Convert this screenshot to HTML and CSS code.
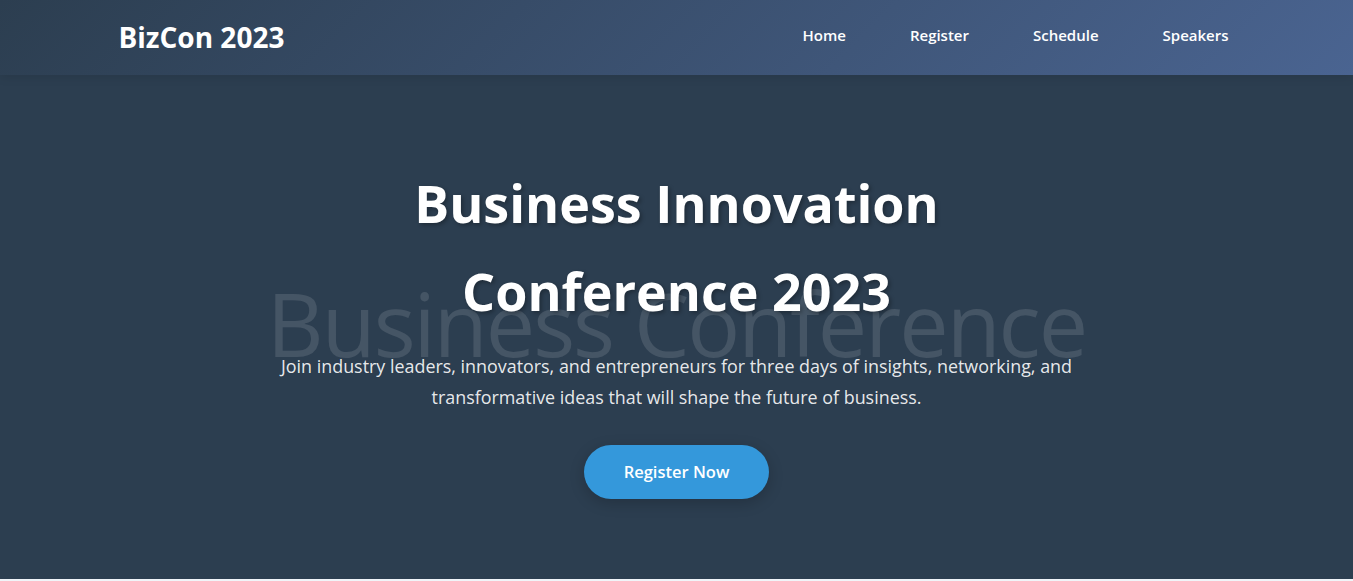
FILE: index.html
```html
<!DOCTYPE html>
<html lang="en">
<head>
<meta charset="UTF-8">
<title>BizCon 2023</title>
<link rel="stylesheet" href="styles.css">
</head>
<body>
<header class="site-header">
  <nav class="nav">
    <div class="logo">BizCon 2023</div>
    <ul class="nav-links">
      <li><a href="#">Home</a></li>
      <li><a href="#">Register</a></li>
      <li><a href="#">Schedule</a></li>
      <li><a href="#">Speakers</a></li>
    </ul>
  </nav>
</header>
<section class="hero">
  <div class="hero-bg-text">Business Conference</div>
  <div class="hero-content">
    <h1>Business Innovation Conference 2023</h1>
    <p>Join industry leaders, innovators, and entrepreneurs for three days of insights, networking, and transformative ideas that will shape the future of business.</p>
    <a href="#" class="btn">Register Now</a>
  </div>
</section>
</body>
</html>
```
FILE: styles.css
```css
* { margin: 0; padding: 0; box-sizing: border-box; }
body {
  font-family: "Open Sans", "Noto Sans", sans-serif;
  line-height: 1.6;
  background: #f0f4f8;
  color: #fff;
}
.site-header {
  height: 75px;
  background: linear-gradient(135deg, #2c3e50 0%, #4a6491 100%);
  box-shadow: 0 2px 10px rgba(0,0,0,0.1);
  position: relative;
  z-index: 2;
}
.nav {
  max-width: 1200px;
  height: 100%;
  margin: 0 auto;
  padding: 0 2rem;
  display: flex;
  align-items: center;
  justify-content: space-between;
}
.logo {
  font-size: 28px;
  font-weight: 700;
  padding-left: 10px;
}
.nav-links { list-style: none; display: flex; }
.nav-links li { margin-left: 2rem; }
.nav-links a {
  display: block;
  color: #fff;
  text-decoration: none;
  font-weight: 600;
  font-size: 15px;
  padding: 5px 16px 11px;
}
.hero {
  height: 504px;
  background: #2c3e50;
  position: relative;
  overflow: hidden;
  display: flex;
  align-items: center;
  justify-content: center;
  text-align: center;
}
.hero-bg-text {
  position: absolute;
  left: 0; right: 0;
  top: 204px;
  font-size: 88px;
  letter-spacing: -2px;
  font-weight: 400;
  line-height: 1;
  color: rgba(255,255,255,0.12);
  white-space: nowrap;
}
.hero-content {
  position: relative;
  max-width: 800px;
  padding-top: 4px;
}
.hero-content h1 {
  font-size: 52px;
  font-weight: 700;
  line-height: 88px;
  text-shadow: 2px 2px 4px rgba(0,0,0,0.3);
  margin-bottom: 16px;
  padding: 0 100px;
}
.hero-content p {
  font-size: 17.9px;
  line-height: 31px;
  color: rgba(255,255,255,0.9);
  margin-bottom: 32px;
}
.btn {
  display: inline-block;
  background: #3498db;
  color: #fff;
  text-decoration: none;
  font-size: 16.5px;
  line-height: 28px;
  font-weight: 600;
  padding: 13px 40px;
  border-radius: 30px;
  box-shadow: 0 4px 15px rgba(0,0,0,0.2);
}
```
